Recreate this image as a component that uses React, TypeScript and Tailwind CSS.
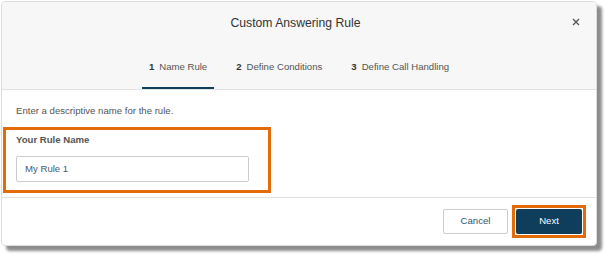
import React from "react";

export default function App() {
  const tabs = [
    { n: "1", label: "Name Rule", active: true },
    { n: "2", label: "Define Conditions", active: false },
    { n: "3", label: "Define Call Handling", active: false },
  ];
  return (
    <div
      className="w-[612px] h-[261px] bg-white pl-[1px] pt-[1px]"
      style={{ fontFamily: '"Liberation Sans", Arial, sans-serif' }}
    >
      <div className="w-[596px] h-[245px] rounded-[4px] border border-[#dcdcdc] bg-white shadow-[5px_5px_3px_rgba(0,0,0,0.45)] flex flex-col overflow-hidden">
        <div className="h-[88px] bg-[#f7f7f7] border-b border-[#e2e2e2] flex flex-col">
          <div className="h-[40px] pt-[1px] grid grid-cols-[1fr_auto_1fr] items-center">
            <div />
            <div className="mr-[7px] text-[12.2px] leading-[14px] text-[#333]">Custom Answering Rule</div>
            <div className="flex justify-end pr-[16px]">
              <svg width="8" height="8" viewBox="0 0 8 8" className="mt-[-2px]">
                <path d="M1 1 L7 7 M7 1 L1 7" stroke="#555" strokeWidth="1.3" />
              </svg>
            </div>
          </div>
          <div className="flex-1 flex justify-center gap-[15px]">
            {tabs.map((t) => (
              <div
                key={t.n}
                className={
                  t.active
                    ? "h-full mb-[-1px] px-[7px] flex items-center pt-[4px] border-b-2 border-[#0f3d5c] text-[9.6px] leading-[12px]"
                    : "h-full mb-[-1px] px-[7px] flex items-center pt-[4px] border-b-2 border-transparent text-[9.6px] leading-[12px]"
                }
              >
                <span className="font-bold text-[#333]">{t.n}</span>
                <span className="ml-[5px] text-[#555]">{t.label}</span>
              </div>
            ))}
          </div>
        </div>

        <div className="flex-1 flex flex-col">
          <div className="pt-[15px] pl-[14px] text-[9.6px] leading-[12px] text-[#555]">
            Enter a descriptive name for the rule.
          </div>
          <div className="mt-[10px] ml-[1px] w-[268px] h-[66px] border-[3px] border-[#e36c09] pl-[10px] pt-[4px] flex flex-col">
            <div className="text-[9.6px] leading-[12px] font-bold text-[#555]">Your Rule Name</div>
            <div className="mt-[10px] w-[233px] h-[26px] border border-[#cccccc] rounded-[2px] bg-white flex items-center pl-[8px] text-[9.6px] text-[#4a5870]">
              My Rule 1
            </div>
          </div>
        </div>

        <div className="h-[48px] border-t border-[#e2e2e2] flex items-center justify-end pr-[10px] gap-[4px]">
          <button className="w-[65px] h-[25px] border border-[#cccccc] rounded-[2px] bg-white text-[9.6px] text-[#2f5572] flex items-center justify-center">
            Cancel
          </button>
          <div className="border-[3px] border-[#e36c09] p-[1px] bg-white">
            <button className="w-[66px] h-[25px] rounded-[2px] bg-[#0f3d5c] text-[9.6px] text-white flex items-center justify-center">
              Next
            </button>
          </div>
        </div>
      </div>
    </div>
  );
}
